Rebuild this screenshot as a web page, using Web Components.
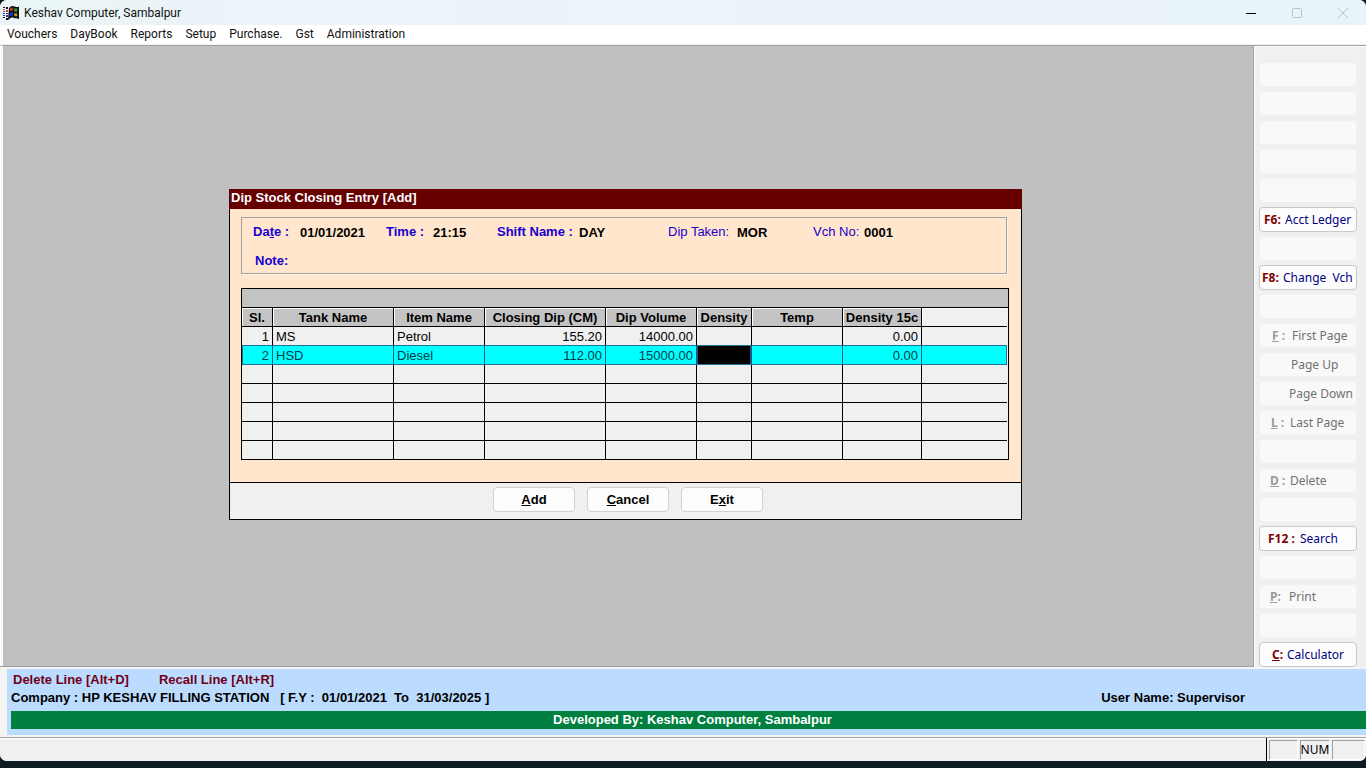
<!DOCTYPE html>
<html lang="en">
<head>
<meta charset="utf-8">
<title>Keshav Computer, Sambalpur</title>
<style>
  html, body { margin: 0; background: #0c1c22; }
  body { font: 13px/20px "Liberation Sans", Arial, sans-serif; color: #000; }
</style>
</head>
<body>
<app-window>
  <title-bar slot="top">Keshav Computer, Sambalpur</title-bar>
  <menu-bar slot="top"></menu-bar>
  <dip-dialog></dip-dialog>
  <key-panel slot="side"></key-panel>
  <info-footer slot="bottom"></info-footer>
  <status-bar slot="bottom"></status-bar>
</app-window>

<script>
const define = (name, html, setup) => {
  const template = document.createElement('template');
  template.innerHTML = '<style>*{box-sizing:border-box}button,input{font:inherit;color:inherit;margin:0}</style>' + html;
  customElements.define(name, class extends HTMLElement {
    constructor() {
      super();
      this.attachShadow({ mode: 'open' }).append(template.content.cloneNode(true));
      if (setup) setup(this.shadowRoot);
    }
  });
};

/* Window frame: bars on top, work area with side keys, bars at the bottom */
define('app-window', `
<style>
  :host { display: flex; flex-direction: column; min-height: 100vh; box-sizing: border-box; padding-bottom: 7px; }
  .frame { flex: 1; display: flex; flex-direction: column; background: #f0f0f0; border-radius: 7px; overflow: hidden; }
  .work { flex: 1; display: grid; grid-template-columns: 1fr 113px; border-bottom: 1px solid #a0a0a0; }
  main { display: flex; align-items: center; justify-content: center; background: #c0c0c0;
         border-left: 3px solid #fafafa; border-top: 1px solid #a0a0a0; padding: 0 5px 3px 0; }
</style>
<div class="frame">
  <slot name="top"></slot>
  <div class="work"><main><slot></slot></main><slot name="side"></slot></div>
  <slot name="bottom"></slot>
</div>`);

define('title-bar', `
<style>
  :host { display: flex; align-items: center; height: 25px; padding-left: 3px; gap: 5px; background: linear-gradient(90deg, #eaf5f7, #ecf3fb 50%, #e8f4f7);
          font: 12px/20px Roboto, "Noto Sans", sans-serif; color: #111; }
  .name { flex: 1; }
  .controls { display: flex; }
  button { width: 46px; height: 25px; border: 0; padding: 0; background: none; color: #b9c3c6; }
  button:first-child { color: #000; }
  svg { display: block; margin: auto; }
  .logo { margin: 0; }
</style>
<svg class="logo" width="16" height="16" viewBox="0 0 16 16" aria-hidden="true">
  <path fill="#101010" d="M6 3C8 .5 10 .5 12 1.500c1.500.8 2.500.8 4 0V14h-1.500v-1c-1.500.5-2.500.3-4-.3-1.500-.6-2.500-.3-3.500.8L5 15z"/>
  <path fill="#b83428" d="M7 3.500c1-1 2-1.200 3-.9V6c-1-.4-2-.2-3 .6z"/>
  <path fill="#2f9a3c" d="M11.200 3c1.200.6 2 .7 3 .4v3.300c-1 .3-1.800.2-3-.4z"/>
  <path fill="#2430c8" d="M6.800 8.300c1-.9 2-1.100 3-.8v3.400c-1-.3-2-.1-3 .8z"/>
  <path fill="#b8a428" d="M11.200 8c1.200.6 2 .7 3 .4v2.800c-1 .3-1.800.2-3-.4z"/>
  <g shape-rendering="crispEdges">
    <path fill="#111" d="M0 2h2v1H0zM3 2h2v2H3zM0 12h2v1H0zM3 13h2v2H3z"/>
    <path fill="#c04048" d="M0 4h2v1H0zM3 5h2v2H3zM0 6h2v1H0z"/>
    <path fill="#2430b8" d="M0 8h2v1H0zM3 8h2v1H3zM0 10h2v1H0zM3 10h2v2H3z"/>
  </g>
</svg>
<span class="name"><slot></slot></span>
<div class="controls">
  <button aria-label="Minimize"><svg width="10" height="10"><path d="M0 5.500h10" stroke="currentColor"/></svg></button>
  <button aria-label="Maximize" disabled><svg width="10" height="10"><rect x=".5" y=".5" width="9" height="9" rx="1" fill="none" stroke="currentColor"/></svg></button>
  <button aria-label="Close" disabled><svg width="10" height="10"><path d="M0 0l10 10M10 0L0 10" stroke="currentColor"/></svg></button>
</div>`);

define('menu-bar', `
<style>
  :host { display: block; background: #fff; border-bottom: 1px solid #f0f0f0; font: 12px/19px Roboto, "Noto Sans", sans-serif; color: #111; }
  nav { display: flex; gap: 13px; padding: 0 7px; }
  button { border: 0; padding: 0; background: none; line-height: 19px; }
</style>
<nav></nav>`, root => {
  const nav = root.querySelector('nav');
  for (const name of ['Vouchers', 'DayBook', 'Reports', 'Setup', 'Purchase.', 'Gst', 'Administration']) {
    const b = document.createElement('button');
    b.textContent = name;
    nav.append(b);
  }
});

/* Column of shortcut keys */
define('key-panel', `
<style>
  :host { display: flex; flex-direction: column; gap: 4px; background: #f0f0f0; padding: 16px 9px 0 5px; margin-bottom: -1px;
          border: solid #a0a0a0; border-width: 1px 0 0 1px; box-shadow: inset 1px 1px #fff;
          font: 12px/16px "Noto Sans", sans-serif; }
  button { display: flex; align-items: center; width: 100%; height: 25px; border: 1px solid #c8c8c8; border-radius: 4px;
           background: #fdfdfd; color: #000080; padding: 0 0 0 var(--pad, 4px); white-space: nowrap; text-align: left; }
  button:disabled { background: #f9f9f9; border-color: #f1f1f1; color: #707070; }
  b { color: #800000; min-width: var(--key, 0px); }
  button:disabled b { color: #9a9a9a; text-shadow: 1px 1px #fff; }
</style>`, root => {
  const keys = [
    , , , , ,
    ['F6:', 'Acct Ledger', 4, 21, true], ,
    ['F8:', 'Change \u00a0Vch', 2, 21, true], ,
    ['<u>F</u> :', 'First Page', 12, 20], ['', 'Page Up', 12, 19], ['', 'Page Down', 12, 17], ['<u>L</u> :', 'Last Page', 11, 19], ,
    ['<u>D</u> :', 'Delete', 10, 20], ,
    ['F12 :', 'Search', 8, 32, true], ,
    ['<u>P</u>:', 'Print', 10, 19], ,
    ['<u>C</u>:', 'Calculator', 12, 15, true]
  ];
  for (let i = 0; i < keys.length; i++) {
    const b = document.createElement('button');
    const k = keys[i];
    b.disabled = !(k && k[4]);
    if (k) {
      b.innerHTML = '<b>' + k[0] + '</b><span>' + k[1] + '</span>';
      b.style.setProperty('--pad', k[2] + 'px');
      b.style.setProperty('--key', k[3] + 'px');
    } else b.setAttribute('aria-label', 'Unused key');
    root.append(b);
  }
});

/* Entry window */
define('dip-dialog', `
<style>
  :host { display: block; width: 793px; max-width: 100%; }
  h1 { margin: 0; height: 20px; padding-left: 2px; background: #660000; color: #fff; font-size: 13px; line-height: 18px; }
  .body { background: #ffe6cc; border: solid #000; border-width: 0 1px; padding: 8px 12px 22px 11px; }
  form { display: grid; grid-template-columns: 47px 86px 47px 64px 82px 89px 69px 76px 51px 1fr; row-gap: 9px;
         border: 1px solid #a0a0a0; box-shadow: 1px 1px #fff5ea; padding: 4px 11px 2px; margin: 0 2px 14px 0; }
  label { color: #1a00d0; font-weight: bold; white-space: pre; }
  label.plain { font-weight: normal; }
  input { width: 100%; border: 0; padding: 1px 0 0; background: none; font-weight: bold; outline: 0; }
  form > * { height: 20px; }
  .note { padding-left: 2px; }
  .wide { grid-column: 2 / -1; }
  footer { display: flex; justify-content: center; gap: 12px; height: 38px; padding: 4px 0 0 5px; background: #f0f0f0; border: 1px solid #000; }
  footer button { width: 82px; height: 25px; border: 1px solid #d0d0d0; border-radius: 4px; background: #fdfdfd; font-weight: bold; padding: 0; }
</style>
<h1>Dip Stock Closing Entry [Add]</h1>
<div class="body">
  <form>
    <label for="date">Da<u>t</u>e :</label><input id="date" value="01/01/2021">
    <label for="time">Time :</label><input id="time" value="21:15">
    <label for="shift">Shift Name :</label><input id="shift" value="DAY">
    <label class="plain" for="dip">Dip Taken:</label><input id="dip" value="MOR">
    <label class="plain" for="vch">Vch No:</label><input id="vch" value="0001">
    <label class="note" for="note">Note:</label><input class="wide" id="note">
  </form>
  <dip-table></dip-table>
</div>
<footer><button><u>A</u>dd</button><button><u>C</u>ancel</button><button>E<u>x</u>it</button></footer>`);

define('dip-table', `
<style>
  :host { display: block; border: 1px solid #000; background: #f0f0f0; }
  .band { height: 19px; background: #c3c3c3; border-bottom: 1px solid #000; }
  .inner { padding-right: 1px; }
  table { width: 100%; table-layout: fixed; border-spacing: 0; line-height: 16px; }
  th, td { height: 19px; padding: 2px 3px 0; border: solid #000; border-width: 0 1px 1px 0; overflow: hidden; white-space: nowrap; }
  th { background: #c3c3c3; padding: 2px 0 0; box-shadow: inset 1px 1px #fff; }
  th:last-child { background: #f0f0f0; }
  th:last-child, td:last-child { border-right: 0; }
  td.num { text-align: right; }
  tbody tr:last-child td { border-bottom: 0; height: 18px; }
  tr.before td { border-bottom-color: #24709a; }
  tr.active td { background: #00ffff; color: #003c48; border-color: #145c84; border-bottom-color: #24709a; }
  tr.active td:first-child { box-shadow: inset 1px 0 #24709a; }
  tr.active td:last-child { border-right: 1px solid #24709a; }
  tr.active td.cell { padding: 0; background: #000; box-shadow: inset 1px 0 #2a4c90, inset -1px 0 #2a4c90; }
  input { display: block; width: 100%; height: 18px; border: 0; padding: 0 3px; background: none; color: #fff; outline: 0; }
</style>
<div class="band"></div>
<div class="inner"><table>
  <colgroup><col style="width:31px"><col style="width:121px"><col style="width:91px"><col style="width:121px"><col style="width:91px"><col style="width:55px"><col style="width:91px"><col style="width:79px"><col></colgroup>
  <thead><tr><th>Sl.</th><th>Tank Name</th><th>Item Name</th><th>Closing Dip (CM)</th><th>Dip Volume</th><th>Density</th><th>Temp</th><th>Density 15c</th><th></th></tr></thead>
  <tbody>
    <tr class="before"><td class="num">1</td><td>MS</td><td>Petrol</td><td class="num">155.20</td><td class="num">14000.00</td><td></td><td></td><td class="num">0.00</td><td></td></tr>
    <tr class="active"><td class="num">2</td><td>HSD</td><td>Diesel</td><td class="num">112.00</td><td class="num">15000.00</td><td class="cell"><input aria-label="Density"></td><td></td><td class="num">0.00</td><td></td></tr>
  </tbody>
</table></div>`, root => {
  const body = root.querySelector('tbody');
  for (let i = 0; i < 5; i++) {
    const row = body.insertRow();
    for (let c = 0; c < 9; c++) row.insertCell();
  }
});

define('info-footer', `
<style>
  :host { display: block; padding: 2px 0 2px 7px; background: #f4f4f4; font-weight: bold; border-bottom: 1px solid #a0a0a0; }
  .panel { background: #bbdbff; padding: 2px 0 6px 4px; line-height: 18px; white-space: pre; }
  .keys { display: flex; gap: 30px; padding-left: 2px; color: #700018; }
  .row { display: flex; justify-content: space-between; padding: 0 121px 0 0; }
  .credit { margin-top: 4px; padding-left: 8px; height: 18px; background: #008040; color: #fff; text-align: center; }
</style>
<div class="panel"><div class="keys"><span>Delete Line [Alt+D]</span><span>Recall Line [Alt+R]</span></div><div class="row"><span>Company : HP KESHAV FILLING STATION   [ F.Y :  01/01/2021  To  31/03/2025 ]</span><span>User Name: Supervisor</span></div><div class="credit">Developed By: Keshav Computer, Sambalpur</div></div>`);

define('status-bar', `
<style>
  :host { display: flex; justify-content: flex-end; gap: 2px; height: 23px; padding-right: 1px; background: #f0f0f0; box-shadow: inset 0 1px #fff;
          font: 12px/18px "Noto Sans", sans-serif; }
  .rule { width: 1px; background: #000; }
  .box { width: 29px; margin: 2px 0 1px; border: 1px solid #a0a0a0; border-right-color: #fff; border-bottom-color: #fff; display: flex; justify-content: center; }
  .num { width: 30px; }
  .end { width: 33px; }
</style>
<span class="rule"></span><span class="box"></span><span class="box num">NUM</span><span class="box end"></span>`);
</script>
</body>
</html>
